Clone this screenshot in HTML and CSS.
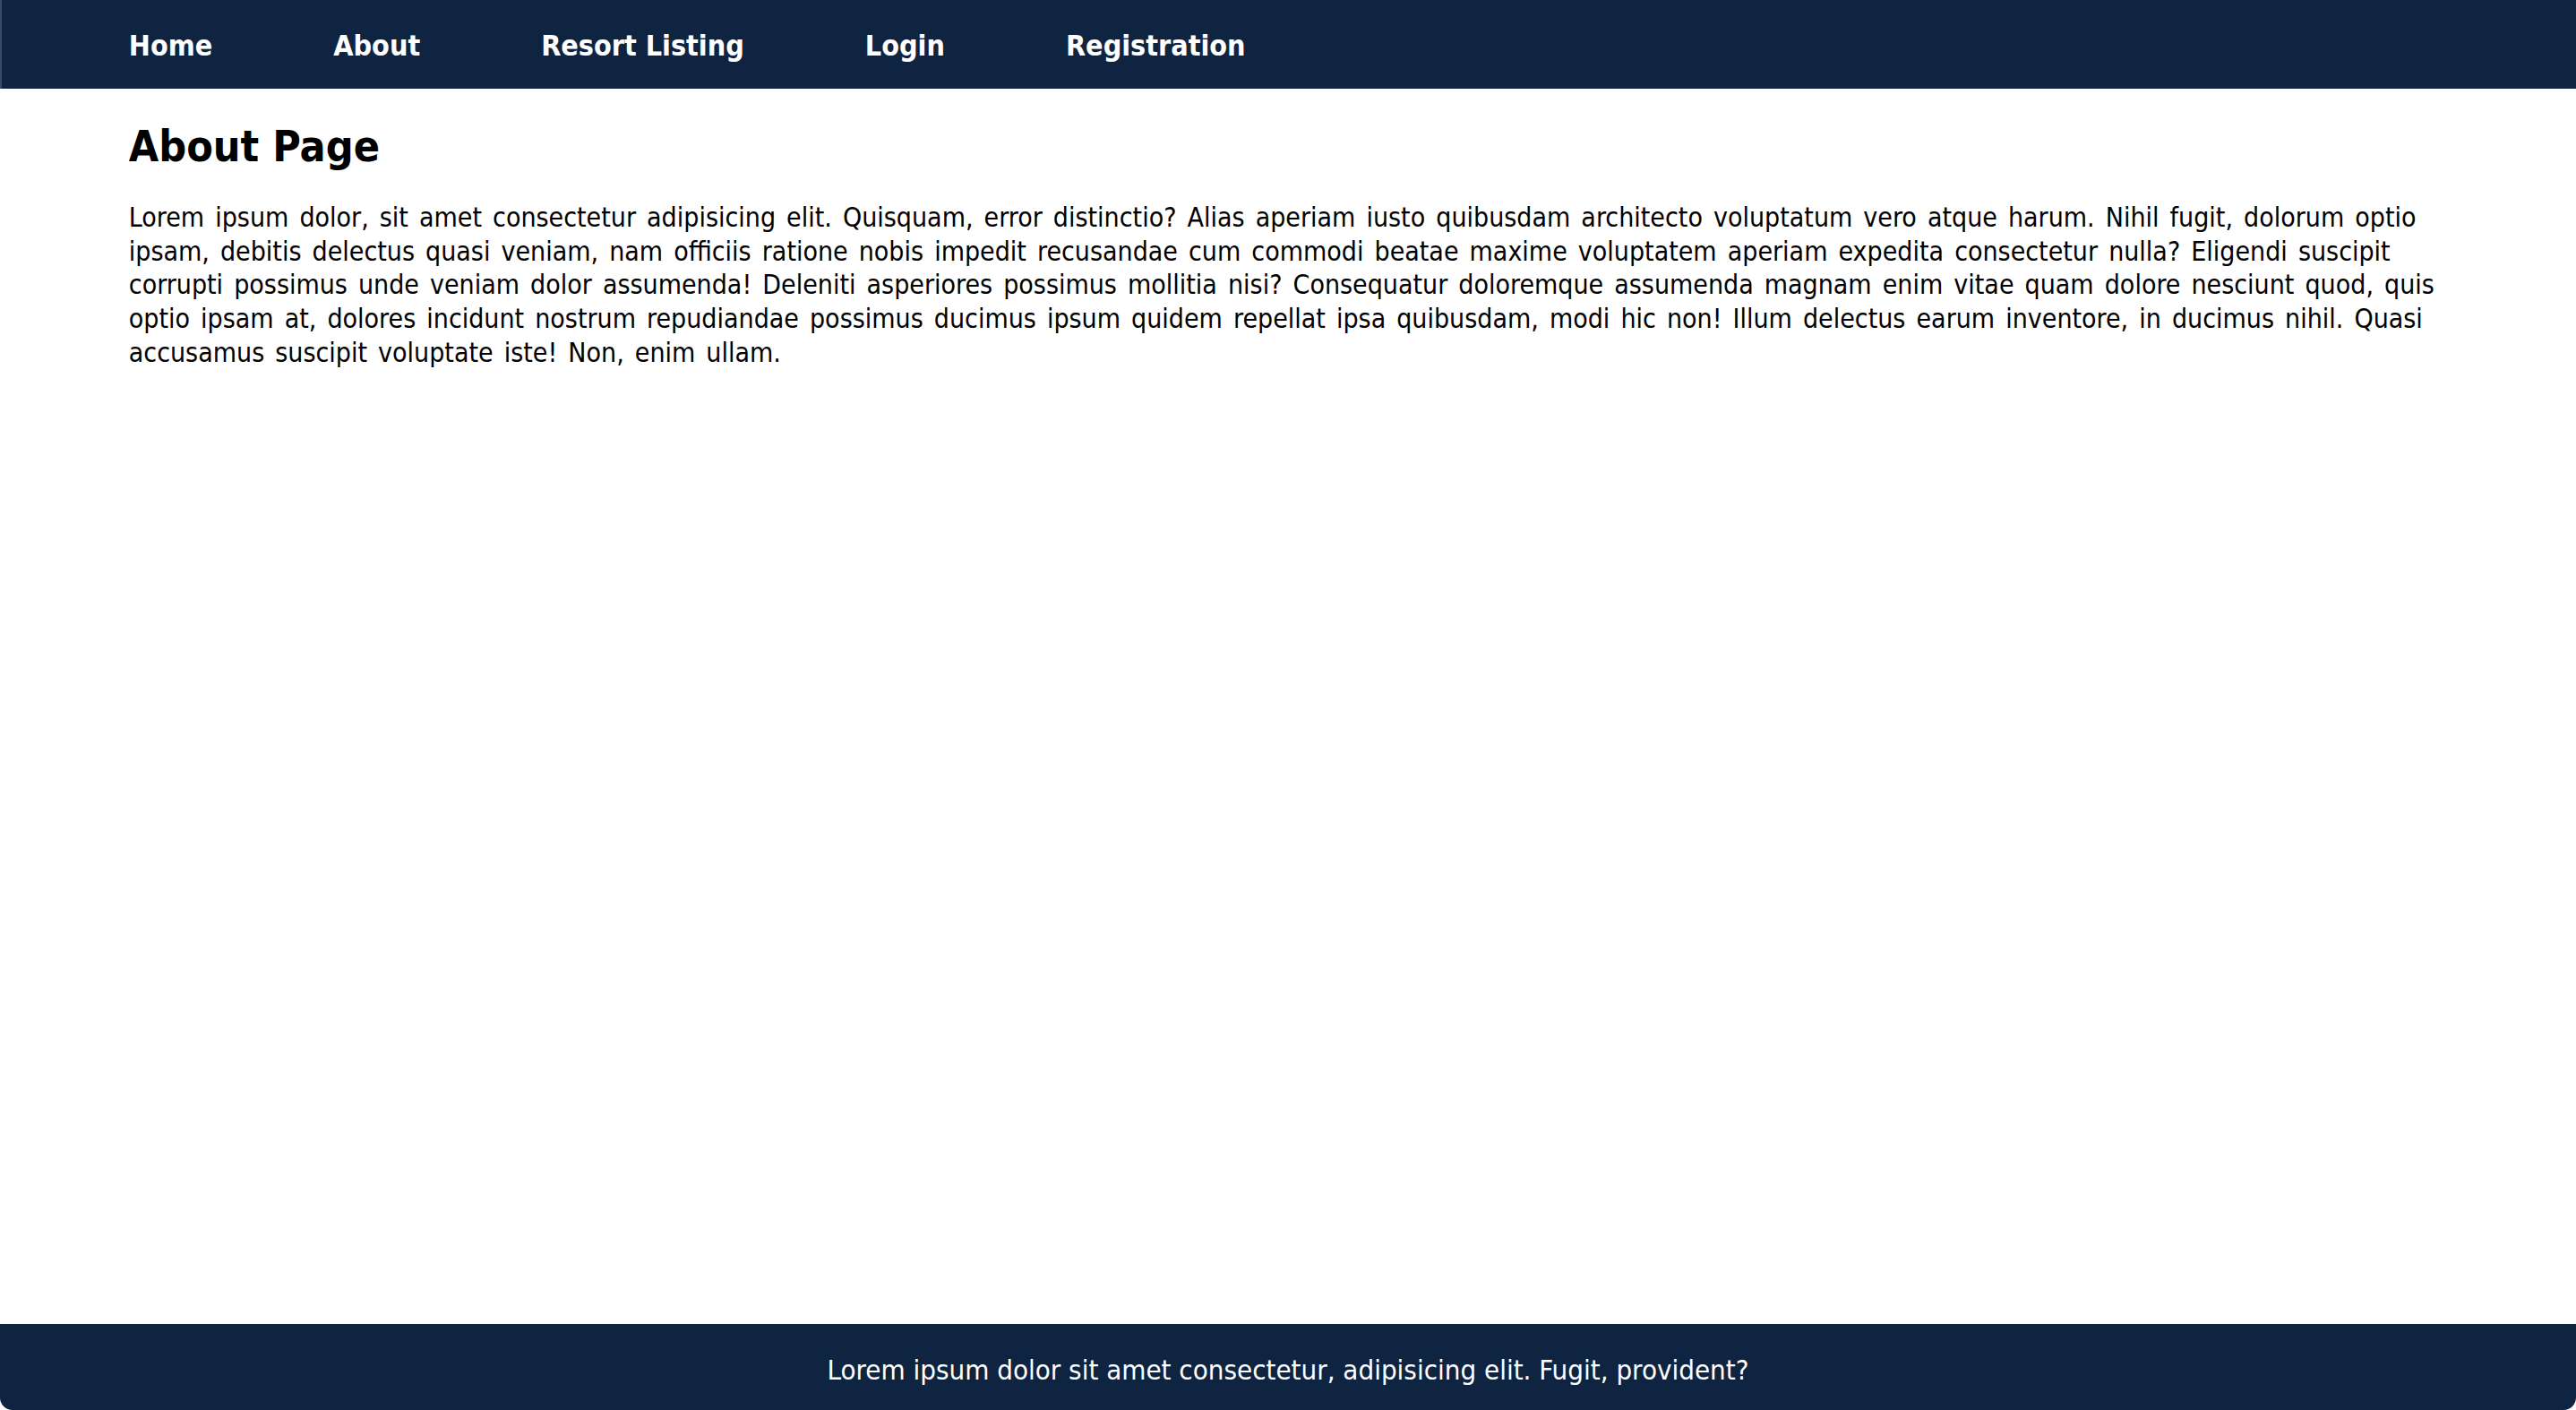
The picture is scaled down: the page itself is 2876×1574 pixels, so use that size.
FILE: index.html
```html
<!DOCTYPE html>
<html lang="en">
<head>
<meta charset="utf-8">
<title>About</title>
<link rel="stylesheet" href="styles.css">
</head>
<body>
<nav class="nav">
  <a class="nav-link" href="#">Home</a>
  <a class="nav-link" href="#">About</a>
  <a class="nav-link" href="#">Resort Listing</a>
  <a class="nav-link" href="#">Login</a>
  <a class="nav-link" href="#">Registration</a>
</nav>
<main class="content">
  <h1 class="title">About Page</h1>
  <p class="text">Lorem ipsum dolor, sit amet consectetur adipisicing elit. Quisquam, error distinctio? Alias aperiam iusto quibusdam architecto voluptatum vero atque harum. Nihil fugit, dolorum optio ipsam, debitis delectus quasi veniam, nam officiis ratione nobis impedit recusandae cum commodi beatae maxime voluptatem aperiam expedita consectetur nulla? Eligendi suscipit corrupti possimus unde veniam dolor assumenda! Deleniti asperiores possimus mollitia nisi? Consequatur doloremque assumenda magnam enim vitae quam dolore nesciunt quod, quis optio ipsam at, dolores incidunt nostrum repudiandae possimus ducimus ipsum quidem repellat ipsa quibusdam, modi hic non! Illum delectus earum inventore, in ducimus nihil. Quasi accusamus suscipit voluptate iste! Non, enim ullam.</p>
</main>
<footer class="footer">
  <p class="footer-text">Lorem ipsum dolor sit amet consectetur, adipisicing elit. Fugit, provident?</p>
</footer>
</body>
</html>
```

FILE: styles.css
```css
* { box-sizing: border-box; }
html, body { height: 100%; }
body {
  margin: 0;
  min-height: 100vh;
  display: flex;
  flex-direction: column;
  font-family: "DejaVu Sans Condensed", "DejaVu Sans", sans-serif;
  color: #000;
  background: #fff;
}
.nav {
  height: 99px;
  background: #0f2440;
  border-left: 2px solid #3a4c64;
  display: flex;
  align-items: center;
  gap: 135px;
  padding: 3px 0 0 calc(5% - 2px);
}
.nav-link {
  color: #fff;
  text-decoration: none;
  font-weight: bold;
  font-size: 32px;
}
.content {
  flex: 1;
  padding: 0 5%;
}
.title {
  margin: 32px 0 0;
  font-size: 48px;
  line-height: 64px;
  font-weight: bold;
}
.text {
  margin: 29px 0 0;
  font-size: 30px;
  line-height: 37.7px;
  word-spacing: 3.5px;
}
.footer {
  height: 96px;
  background: #0f2440;
  display: flex;
  align-items: center;
  justify-content: center;
  padding-top: 5px;
  border-radius: 0 0 14px 14px;
}
.footer-text {
  margin: 0;
  color: #fff;
  font-size: 31px;
}
```
